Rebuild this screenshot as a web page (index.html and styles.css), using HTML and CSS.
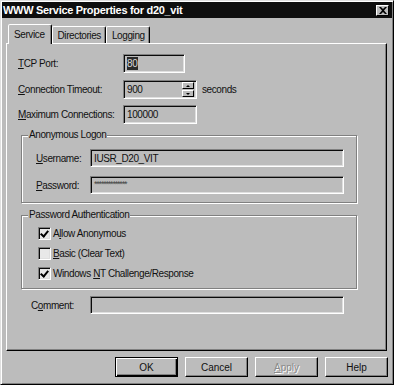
FILE: index.html
```html
<!DOCTYPE html>
<html lang="en">

<head>
  <meta charset="UTF-8">
  <title>WWW Service Properties for d20_vit</title>
  <link rel="stylesheet" href="styles.css">
</head>

<body>
  <div class="window">
    <div class="titlebar">
      <span class="title">WWW Service Properties for d20_vit</span>
      <span class="close">
        <svg width="8" height="7" viewBox="0 0 8 7"><path d="M0 0h2l2 2 2-2h2L5 3.5 8 7H6L4 5 2 7H0l3-3.5z" fill="#000"/></svg>
      </span>
    </div>

    <div class="tabs">
      <div class="tab active">Service</div>
      <div class="tab">Directories</div>
      <div class="tab">Logging</div>
    </div>

    <div class="panel">
      <div class="row first">
        <span class="lbl"><u>T</u>CP Port:</span>
        <div class="field port"><span class="sel">80</span></div>
      </div>
      <div class="row second">
        <span class="lbl"><u>C</u>onnection Timeout:</span>
        <div class="field spin">
          <span class="val">900</span>
          <span class="spinner">
            <span class="sbtn"><i class="up"></i></span>
            <span class="sbtn"><i class="down"></i></span>
          </span>
        </div>
        <span class="unit">seconds</span>
      </div>
      <div class="row third">
        <span class="lbl"><u>M</u>aximum Connections:</span>
        <div class="field maxc"><span class="val">100000</span></div>
      </div>

      <fieldset class="group logon">
        <legend>Anonymous Logon</legend>
        <div class="group-body">
          <div class="grow">
            <span class="glbl"><u>U</u>sername:</span>
            <div class="field wide"><span class="val">IUSR_D20_VIT</span></div>
          </div>
          <div class="grow pw">
            <span class="glbl"><u>P</u>assword:</span>
            <div class="field wide"><span class="stars">**************</span></div>
          </div>
        </div>
      </fieldset>

      <fieldset class="group auth">
        <legend>Password Authentication</legend>
        <div class="group-body checks">
          <div class="check"><span class="box on"></span><span>A<u>l</u>low Anonymous</span></div>
          <div class="check"><span class="box"></span><span><u>B</u>asic (Clear Text)</span></div>
          <div class="check"><span class="box on"></span><span>Windows <u>N</u>T Challenge/Response</span></div>
        </div>
      </fieldset>

      <div class="row comment">
        <span class="clbl">C<u>o</u>mment:</span>
        <div class="field wide"></div>
      </div>
    </div>

    <div class="buttons">
      <button class="btn default">OK</button>
      <button class="btn">Cancel</button>
      <button class="btn disabled"><u>A</u>pply</button>
      <button class="btn">Help</button>
    </div>
  </div>
</body>
</html>
```

FILE: styles.css
```css
body {
  margin: 0;
  background: #bcbcbc;
  font-family: "Liberation Sans", Arial, sans-serif;
  font-size: 10px;
  letter-spacing: -0.4px;
  color: #111;
}

.window {
  width: 394px;
  height: 385px;
  box-sizing: border-box;
  border: 1px solid;
  border-color: #dfdfdf #000 #000 #dfdfdf;
  box-shadow: inset 1px 1px 0 #fff, inset -1px -1px 0 #808080;
  padding: 1px;
  background: #bcbcbc;
}

/* title bar */
.titlebar {
  height: 16px;
  background: #0e0e0e;
  color: #fff;
  display: flex;
  align-items: center;
  justify-content: space-between;
  padding: 0 3px 0 1px;
}

.title {
  font-weight: bold;
  font-size: 11px;
  letter-spacing: -0.3px;
}

.close {
  width: 13px;
  height: 11px;
  box-sizing: border-box;
  background: #bcbcbc;
  border: 1px solid;
  border-color: #fff #000 #000 #fff;
  display: flex;
  align-items: center;
  justify-content: center;
}

/* tabs */
.tabs {
  display: flex;
  align-items: flex-end;
  height: 25px;
  padding-left: 6px;
}

.tab {
  height: 17px;
  box-sizing: border-box;
  padding: 3px 4px 0 5px;
  border: 1px solid;
  border-bottom: none;
  border-color: #fff #000 transparent #fff;
  border-radius: 2px 2px 0 0;
  box-shadow: inset -1px 0 0 #808080;
}

.tab.active {
  height: 20px;
  margin-bottom: -1px;
  padding: 4px 6px 0 5px;
  background: #bcbcbc;
  position: relative;
  z-index: 1;
}

/* main page */
.panel {
  margin-left: 4px;
  width: 381px;
  height: 308px;
  box-sizing: border-box;
  border: 1px solid;
  border-color: #fff #000 #000 #fff;
  box-shadow: inset -1px -1px 0 #808080;
  padding-left: 11px;
}

.row {
  display: flex;
  align-items: center;
  height: 19px;
}

.row.first { margin-top: 10px; }
.row.second { margin-top: 7px; }
.row.third { margin-top: 6px; }

.lbl {
  width: 105px;
}

.field {
  height: 19px;
  box-sizing: border-box;
  border: 1px solid;
  border-color: #808080 #fff #fff #808080;
  box-shadow: inset 1px 1px 0 #0a0a0a, inset -1px -1px 0 #dfdfdf;
  display: flex;
  align-items: center;
  padding-left: 3px;
}

.port { width: 62px; }
.spin { width: 74px; padding-right: 2px; }
.maxc { width: 74px; }

.sel {
  background: #2a2a2a;
  color: #d8d8d8;
  padding: 1px 1px 1px 0;
}

.val { flex: 1; }

.spinner {
  display: flex;
  flex-direction: column;
  gap: 1px;
}

.sbtn {
  width: 12px;
  height: 7px;
  box-sizing: border-box;
  border: 1px solid;
  border-color: #fff #000 #000 #fff;
  display: flex;
  align-items: center;
  justify-content: center;
}

.sbtn i {
  width: 0;
  height: 0;
  border-left: 2px solid transparent;
  border-right: 2px solid transparent;
}

.sbtn .up { border-bottom: 2px solid #000; }
.sbtn .down { border-top: 2px solid #000; }

.unit {
  margin-left: 5px;
}

/* group boxes */
.group {
  margin: 5px 0 0 3px;
  width: 336px;
  box-sizing: border-box;
  padding: 0;
  border: 1px solid #808080;
  box-shadow: inset 1px 1px 0 #fff, 1px 1px 0 #fff;
  min-inline-size: 0;
}

.group legend {
  margin-left: 6px;
  padding: 0 1px;
  line-height: 12px;
  background: #bcbcbc;
}

.logon .group-body {
  padding: 8px 12px 8px 14px;
}

.grow {
  display: flex;
  align-items: center;
  height: 18px;
}

.grow.pw { margin-top: 9px; }

.glbl { width: 54px; }

.field.wide { flex: 1; height: 18px; }

.stars {
  color: #444;
  font-size: 9px;
  letter-spacing: -1.2px;
  margin-top: -2px;
}

.auth { margin-top: 6px; }

.checks {
  padding: 4px 0 7px 16px;
  display: flex;
  flex-direction: column;
  gap: 4px;
}

.check {
  display: flex;
  align-items: center;
  height: 16px;
}

.box {
  width: 13px;
  height: 13px;
  box-sizing: border-box;
  margin-right: 2px;
  border: 1px solid;
  border-color: #808080 #fff #fff #808080;
  box-shadow: inset 1px 1px 0 #0a0a0a, inset -1px -1px 0 #dfdfdf;
  background: #e8e8e8;
  position: relative;
}

.box.on::after {
  content: "";
  position: absolute;
  left: 3px;
  top: 1px;
  width: 3px;
  height: 6px;
  border: solid #000;
  border-width: 0 2px 2px 0;
  transform: rotate(40deg);
}

.row.comment {
  margin-top: 7px;
  width: 326px;
  height: 18px;
}

.clbl {
  margin-left: 13px;
  width: 59px;
}

/* buttons */
.buttons {
  display: flex;
  justify-content: flex-end;
  gap: 7px;
  margin-top: 6px;
  padding-right: 4px;
}

.btn {
  width: 63px;
  height: 20px;
  box-sizing: border-box;
  font: inherit;
  color: #111;
  background: #bcbcbc;
  border: 1px solid;
  border-color: #fff #000 #000 #fff;
  box-shadow: inset -1px -1px 0 #808080;
  padding: 0;
}

.btn.default {
  border: 1px solid #000;
  box-shadow: inset 1px 1px 0 #fff, inset -1px -1px 0 #000, inset -2px -2px 0 #808080;
}

.btn.disabled {
  color: #8a8a8a;
  text-shadow: 1px 1px 0 #fff;
}
```
